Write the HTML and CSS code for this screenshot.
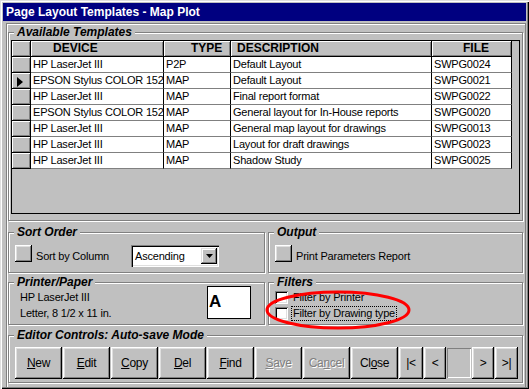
FILE: index.html
```html
<!DOCTYPE html>
<html lang="en">
<head>
  <meta charset="UTF-8" />
  <title>Page Layout Templates - Map Plot</title>
  <link rel="stylesheet" href="styles.css">
</head>
<body>

<div class="window">
  <div class="titlebar">Page Layout Templates - Map Plot</div>

  <div class="client">

    <!-- Available Templates -->
    <div class="group templates">
      <div class="legend">Available Templates</div>
      <div class="grid">
        <table>
          <colgroup>
            <col style="width:19px"><col style="width:133px"><col style="width:67px"><col style="width:201px"><col style="width:80px">
          </colgroup>
          <tr>
            <th class="ind"></th>
            <th class="h-dev">DEVICE</th>
            <th class="h-type">TYPE</th>
            <th class="h-desc">DESCRIPTION</th>
            <th class="h-file">FILE</th>
          </tr>
          <tr><td class="ind"></td><td>HP LaserJet III</td><td>P2P</td><td>Default Layout</td><td>SWPG0024</td></tr>
          <tr><td class="ind"><svg class="cur" width="6" height="10"><polygon points="0,0 6,5 0,10" fill="#000"/></svg></td><td>EPSON Stylus COLOR 1520</td><td>MAP</td><td>Default Layout</td><td>SWPG0021</td></tr>
          <tr><td class="ind"></td><td>HP LaserJet III</td><td>MAP</td><td>Final report format</td><td>SWPG0022</td></tr>
          <tr><td class="ind"></td><td>EPSON Stylus COLOR 1520</td><td>MAP</td><td>General layout for In-House reports</td><td>SWPG0020</td></tr>
          <tr><td class="ind"></td><td>HP LaserJet III</td><td>MAP</td><td>General map layout for drawings</td><td>SWPG0013</td></tr>
          <tr><td class="ind"></td><td>HP LaserJet III</td><td>MAP</td><td>Layout for draft drawings</td><td>SWPG0023</td></tr>
          <tr><td class="ind"></td><td>HP LaserJet III</td><td>MAP</td><td>Shadow Study</td><td>SWPG0025</td></tr>
        </table>
      </div>
    </div>

    <!-- Sort / Output -->
    <div class="pair row-sort">
      <div class="group sort">
        <div class="legend">Sort Order</div>
        <div class="line">
          <span class="chkbtn"></span>
          <span class="line-label">Sort by Column</span>
          <div class="select">
            <span>Ascending</span>
            <span class="arrow"><svg width="7" height="4"><polygon points="0,0 7,0 3.5,4" fill="#000"/></svg></span>
          </div>
        </div>
      </div>
      <div class="group sort">
        <div class="legend">Output</div>
        <div class="line">
          <span class="chkbtn"></span>
          <span>Print Parameters Report</span>
        </div>
      </div>
    </div>

    <!-- Printer / Filters -->
    <div class="pair row-printer">
      <div class="group printer">
        <div class="legend">Printer/Paper</div>
        <div class="paper">
          <div class="paper-info">
            <div>HP LaserJet III</div>
            <div>Letter, 8 1/2 x 11 in.</div>
          </div>
          <div class="preview">A</div>
        </div>
      </div>
      <div class="group printer">
        <div class="legend">Filters</div>
        <div class="filters">
          <div class="chk-row"><span class="chk"></span><span class="chk-text">Filter by Printer</span></div>
          <div class="chk-row"><span class="chk"></span><span class="chk-text focus">Filter by Drawing type</span></div>
        </div>
      </div>
    </div>

    <!-- Editor Controls -->
    <div class="group editor">
      <div class="legend">Editor Controls: Auto-save Mode</div>
      <div class="buttons">
        <button class="btn"><u>N</u>ew</button>
        <button class="btn"><u>E</u>dit</button>
        <button class="btn"><u>C</u>opy</button>
        <button class="btn"><u>D</u>el</button>
        <button class="btn"><u>F</u>ind</button>
        <button class="btn" disabled><u>S</u>ave</button>
        <button class="btn" disabled>Ca<u>n</u>cel</button>
        <button class="btn">Cl<u>o</u>se</button>
        <button class="btn nav w24">|&lt;</button>
        <button class="btn nav w22">&lt;</button>
        <span class="navfield"></span>
        <button class="btn nav w22">&gt;</button>
        <button class="btn nav w23">&gt;|</button>
      </div>
    </div>

  </div>

  <!-- red callout drawn over the Filters group -->
  <svg class="callout" width="150" height="45">
    <ellipse cx="74" cy="22" rx="71" ry="18" fill="none" stroke="#ff0000" stroke-width="3"/>
  </svg>
</div>

</body>
</html>
```

FILE: styles.css
```css
html, body {
  margin: 0;
  padding: 0;
}

body {
  background: #c0c0c0;
  font-family: "Liberation Sans", Arial, sans-serif;
  font-size: 11px;
  letter-spacing: -0.2px;
  color: #000;
}

.window {
  position: relative;
  width: 529px;
  height: 389px;
  box-sizing: border-box;
  padding: 3px;
  display: flex;
  flex-direction: column;
  box-shadow: inset 1px 1px #dfdfdf, inset 2px 2px #fff, inset -1px -1px #000, inset -2px -2px #808080;
}

.titlebar {
  height: 18px;
  line-height: 18px;
  padding-left: 3px;
  background: #000080;
  color: #fff;
  font-size: 12px;
  font-weight: bold;
  letter-spacing: 0;
}

.client {
  flex: 1;
  margin: 2px 0 0 3px;
  border: 1px solid #808080;
  box-shadow: inset 1px 1px #fff;
  padding: 8px 2px 4px 1px;
  display: flex;
  flex-direction: column;
}

/* etched group box */
.group {
  display: flex;
  flex-direction: column;
  border: 1px solid #808080;
  box-shadow: inset 1px 1px #fff, 1px 1px #fff;
  padding: 0 4px 0 6px;
}

.legend {
  align-self: flex-start;
  margin: -7px 0 -6px -1px;
  padding: 0 3px;
  background: #c0c0c0;
  font-size: 12px;
  font-weight: bold;
  font-style: italic;
  line-height: 13px;
  letter-spacing: 0;
  white-space: nowrap;
}

/* templates grid */
.templates {
  padding: 0 2px 6px 6px;
}

.grid {
  margin: 7px 0 0 -4px;
  width: 509px;
  height: 174px;
  box-sizing: border-box;
  border: 1px solid #000;
  background: #c0c0c0;
  overflow: hidden;
}

.grid table {
  width: 500px;
  table-layout: fixed;
  border-collapse: separate;
  border-spacing: 0;
}

.grid th,
.grid td {
  padding: 0 0 0 2px;
  line-height: 15px;
  white-space: nowrap;
  overflow: hidden;
  vertical-align: top;
  text-align: left;
}

.grid td {
  background: #fff;
  border-right: 1px solid #000;
  border-bottom: 1px solid #808080;
}

.grid th {
  background: #c0c0c0;
  box-shadow: inset 1px 1px #fff, inset -1px -1px #808080;
  border-right: 1px solid #000;
  border-bottom: 1px solid #000;
  font-size: 12px;
  font-weight: bold;
  letter-spacing: 0;
}

.grid .ind {
  padding: 0;
  background: #c0c0c0;
  box-shadow: inset 1px 1px #fff, inset -1px -1px #808080;
  border-bottom-color: #000;
}

.grid .h-dev { padding-left: 22px; }
.grid .h-type { padding-left: 27px; }
.grid .h-desc { padding-left: 6px; }
.grid .h-file { padding-left: 31px; }

.cur {
  display: block;
  margin: 4px 0 0 5px;
}

/* two groups side by side */
.pair {
  display: grid;
  grid-template-columns: 257px 255px;
  column-gap: 3px;
}

.row-sort { margin-top: 11px; }
.row-printer { margin-top: 9px; }

.sort {
  padding-bottom: 5px;
}

.line {
  margin-top: 12px;
  height: 22px;
  display: flex;
  align-items: center;
}

.chkbtn {
  align-self: flex-start;
  width: 17px;
  height: 17px;
  margin-right: 4px;
  box-sizing: border-box;
  background: #c0c0c0;
  box-shadow: inset -1px -1px #000, inset 1px 1px #fff, inset -2px -2px #808080, inset 2px 2px #dfdfdf;
}

.line-label {
  width: 95px;
}

.select {
  width: 88px;
  height: 22px;
  box-sizing: border-box;
  padding: 0 2px 0 4px;
  display: flex;
  align-items: center;
  background: #fff;
  box-shadow: inset 1px 1px #808080, inset 2px 2px #000, inset -1px -1px #fff, inset -2px -2px #dfdfdf;
}

.arrow {
  margin-left: auto;
  width: 16px;
  height: 16px;
  box-sizing: border-box;
  display: flex;
  align-items: center;
  justify-content: center;
  background: #c0c0c0;
  box-shadow: inset -1px -1px #000, inset 1px 1px #dfdfdf, inset -2px -2px #808080, inset 2px 2px #fff;
}

.arrow svg {
  display: block;
}

/* printer / paper */
.printer {
  padding-bottom: 3px;
}

.paper {
  margin-top: 3px;
  display: flex;
}

.paper-info {
  margin: 3px 0 0 5px;
  line-height: 16px;
}

.preview {
  margin: 0 9px 0 auto;
  width: 44px;
  height: 33px;
  box-sizing: border-box;
  padding: 6px 0 0 1px;
  border: 1px solid #000;
  background: #fff;
  font-size: 17px;
  font-weight: bold;
  line-height: 17px;
  letter-spacing: 0;
}

/* filters */
.filters {
  margin-top: 6px;
}

.chk-row {
  height: 16px;
  display: flex;
  align-items: center;
}

.chk {
  width: 13px;
  height: 13px;
  margin-right: 4px;
  box-sizing: border-box;
  background: #fff;
  box-shadow: inset 1px 1px #808080, inset -1px -1px #fff, inset 2px 2px #000, inset -2px -2px #dfdfdf;
}

.chk-text {
  padding: 0 1px;
  line-height: 13px;
}

.focus {
  outline: 1px dotted #000;
}

/* editor buttons */
.editor {
  margin-top: 10px;
  padding-bottom: 3px;
}

.buttons {
  margin-top: 11px;
  display: flex;
  gap: 1px;
}

.btn {
  width: 47px;
  height: 32px;
  box-sizing: border-box;
  padding: 0;
  border: none;
  background: #c0c0c0;
  box-shadow: inset -1px -1px #000, inset 1px 1px #fff, inset -2px -2px #808080, inset 2px 2px #dfdfdf;
  font-family: "Liberation Sans", Arial, sans-serif;
  font-size: 12px;
  letter-spacing: -0.3px;
  color: #000;
}

.btn:disabled {
  color: #808080;
  text-shadow: 1px 1px 0 #fff;
}

.nav.w24 { width: 24px; }
.nav.w23 { width: 23px; }
.nav.w22 { width: 22px; }

.navfield {
  width: 24px;
  height: 30px;
  margin-top: 1px;
  box-shadow: inset 1px 1px #808080, inset -1px -1px #fff;
}

.callout {
  position: absolute;
  left: 264px;
  top: 288px;
  pointer-events: none;
}
```
